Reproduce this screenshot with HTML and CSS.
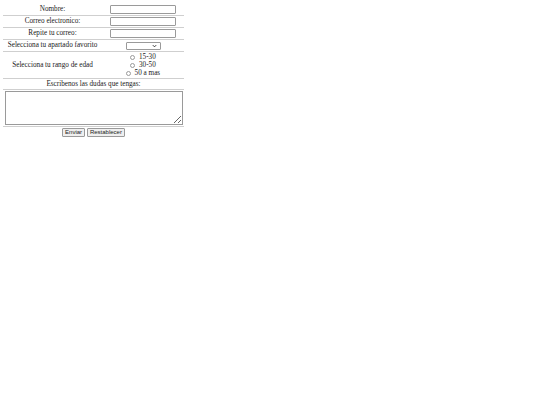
FILE: index.html
```html
<!DOCTYPE html>
<html>
<head>
<meta charset="utf-8">
<link rel="stylesheet" href="styles.css">
</head>
<body>
<form class="form">
<table class="tbl">
<tr class="row"><td class="lbl">Nombre:</td><td class="fld"><input class="txt" type="text"></td></tr>
<tr class="row"><td class="lbl">Correo electronico:</td><td class="fld"><input class="txt" type="text"></td></tr>
<tr class="row"><td class="lbl">Repite tu correo:</td><td class="fld"><input class="txt" type="text"></td></tr>
<tr class="row"><td class="lbl">Selecciona tu apartado favorito</td><td class="fld"><span class="sel"><svg class="chev" viewBox="0 0 6 4" width="5" height="4"><path d="M1 1 L3 3 L5 1" fill="none" stroke="#333" stroke-width="1.2"/></svg></span></td></tr>
<tr class="row"><td class="lbl">Selecciona tu rango de edad</td><td class="fld radios">
<label class="rad"><input type="radio" name="e"> 15-30</label>
<label class="rad"><input type="radio" name="e"> 30-50</label>
<label class="rad"><input type="radio" name="e"> 50 a mas</label>
</td></tr>
<tr class="row"><td class="lbl ask" colspan="2">Escribenos las dudas que tengas:</td></tr>
<tr class="row"><td colspan="2" class="area-cell"><textarea class="area"></textarea></td></tr>
<tr><td colspan="2" class="btns"><button type="button" class="btn">Enviar</button> <button type="button" class="btn">Restablecer</button></td></tr>
</table>
</form>
</body>
</html>
```
FILE: styles.css
```css
html, body { background: #fff; }
body {
  margin: 4px 3px;
  font-family: "Liberation Serif", serif;
  font-size: 7.2px;
  color: #1a1a1a;
}
.form { margin: 0; }
.tbl {
  width: 181px;
  border-collapse: collapse;
}
.tbl td { padding: 1px 0; text-align: center; vertical-align: middle; }
.row td { border-bottom: 1px solid #cfcfcf; }
.lbl { width: 99px; line-height: 9px; }
.fld { line-height: 8px; }
.txt {
  width: 64px;
  height: 7px;
  padding: 0;
  border: 1px solid #9a9a9a;
  border-radius: 1px;
  font-size: 6px;
  margin: 0;
  box-sizing: content-box;
  vertical-align: middle;
}
.sel {
  display: inline-flex;
  justify-content: flex-end;
  align-items: center;
  box-sizing: border-box;
  width: 35px;
  height: 8px;
  border: 1px solid #9a9a9a;
  border-radius: 1px;
  padding-right: 3px;
  vertical-align: middle;
}
.chev { display: block; }
.radios { padding: 0; }
.rad { display: block; line-height: 8.1px; }
.rad input {
  -webkit-appearance: none;
  appearance: none;
  width: 5px; height: 5px;
  border: 0.7px solid #9a9a9a;
  border-radius: 50%;
  margin: 0 2px 0 0;
  vertical-align: -0.5px;
  box-sizing: border-box;
}
.ask { padding: 0 0 1px; line-height: 8px; }
.area-cell { padding: 1px 0 1px; }
.area {
  display: block;
  width: 176px;
  height: 32px;
  margin: 0 auto;
  padding: 0;
  border: 1px solid #9a9a9a;
  resize: both;
}
.btns { padding-top: 2px; }
.btn {
  font-family: "Liberation Sans", sans-serif;
  font-size: 6px;
  color: #222;
  padding: 0 2px;
  height: 9px;
  line-height: 7px;
  margin: 0;
  border: 1px solid #9a9a9a;
  border-radius: 1px;
  background: #efefef;
}
```
